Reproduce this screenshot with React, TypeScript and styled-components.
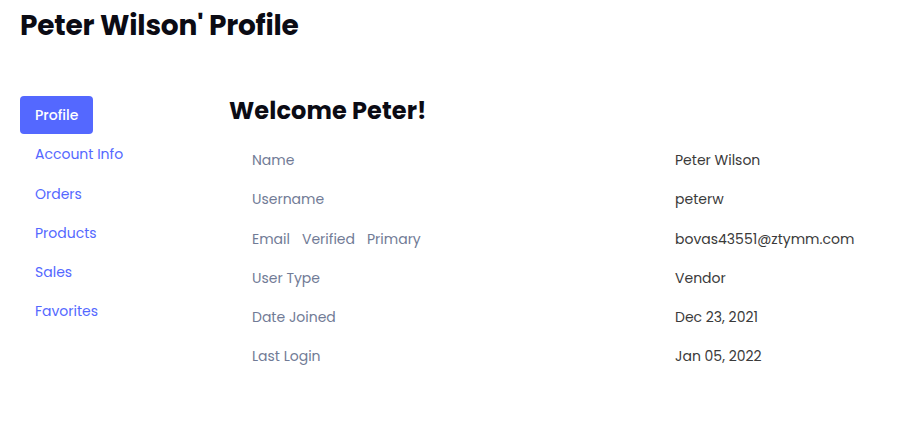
import React from "react";
import styled, { createGlobalStyle } from "styled-components";

const Global = createGlobalStyle`
  html, body { margin: 0; padding: 0; background: #ffffff; }
  body { font-family: "Poppins", "Open Sans", "Noto Sans", sans-serif; }
`;

const Page = styled.div`
  padding: 6px 20px 20px 20px;
`;

const Title = styled.h1`
  margin: 0;
  font-size: 28px;
  line-height: 40px;
  font-weight: 700;
  color: #0b0b14;
  letter-spacing: -0.2px;
`;

const Main = styled.div`
  display: flex;
  margin-top: 50px;
`;

const Sidebar = styled.nav`
  width: 209px;
  flex: none;
  display: flex;
  flex-direction: column;
  align-items: flex-start;
  gap: 1.3px;
`;

const NavItem = styled.a<{ $active?: boolean }>`
  display: block;
  height: 38px;
  line-height: 38px;
  padding: 0 15px;
  border-radius: 4px;
  font-size: 14px;
  text-decoration: none;
  color: ${(p) => (p.$active ? "#ffffff" : "#5468ff")};
  background: ${(p) => (p.$active ? "#5468ff" : "transparent")};
  font-weight: ${(p) => (p.$active ? 500 : 400)};
`;

const Content = styled.section`
  flex: 1;
`;

const Welcome = styled.h2`
  margin: 0;
  font-size: 24px;
  line-height: 28px;
  font-weight: 700;
  color: #0b0b14;
  padding-top: 1px;
  letter-spacing: 0.1px;
`;

const Table = styled.div`
  display: grid;
  grid-template-columns: 423px 1fr;
  margin-top: 16px;
  padding-left: 23px;
`;

const Label = styled.div`
  height: 39.3px;
  line-height: 39px;
  font-size: 14px;
  color: #717b96;
  display: flex;
  gap: 12px;
`;

const Value = styled.div`
  height: 39.3px;
  line-height: 39px;
  font-size: 14px;
  color: #3a3a3a;
`;

const nav = ["Profile", "Account Info", "Orders", "Products", "Sales", "Favorites"];
const rows: [string[], string][] = [
  [["Name"], "Peter Wilson"],
  [["Username"], "peterw"],
  [["Email", "Verified", "Primary"], "bovas43551@ztymm.com"],
  [["User Type"], "Vendor"],
  [["Date Joined"], "Dec 23, 2021"],
  [["Last Login"], "Jan 05, 2022"],
];

export default function App() {
  return (
    <Page>
      <Global />
      <Title>Peter Wilson' Profile</Title>
      <Main>
        <Sidebar>
          {nav.map((n, i) => (
            <NavItem key={n} $active={i === 0}>
              {n}
            </NavItem>
          ))}
        </Sidebar>
        <Content>
          <Welcome>Welcome Peter!</Welcome>
          <Table>
            {rows.map(([l, v]) => (
              <React.Fragment key={l.join()}>
                <Label>
                  {l.map((part) => (
                    <span key={part}>{part}</span>
                  ))}
                </Label>
                <Value>{v}</Value>
              </React.Fragment>
            ))}
          </Table>
        </Content>
      </Main>
    </Page>
  );
}
